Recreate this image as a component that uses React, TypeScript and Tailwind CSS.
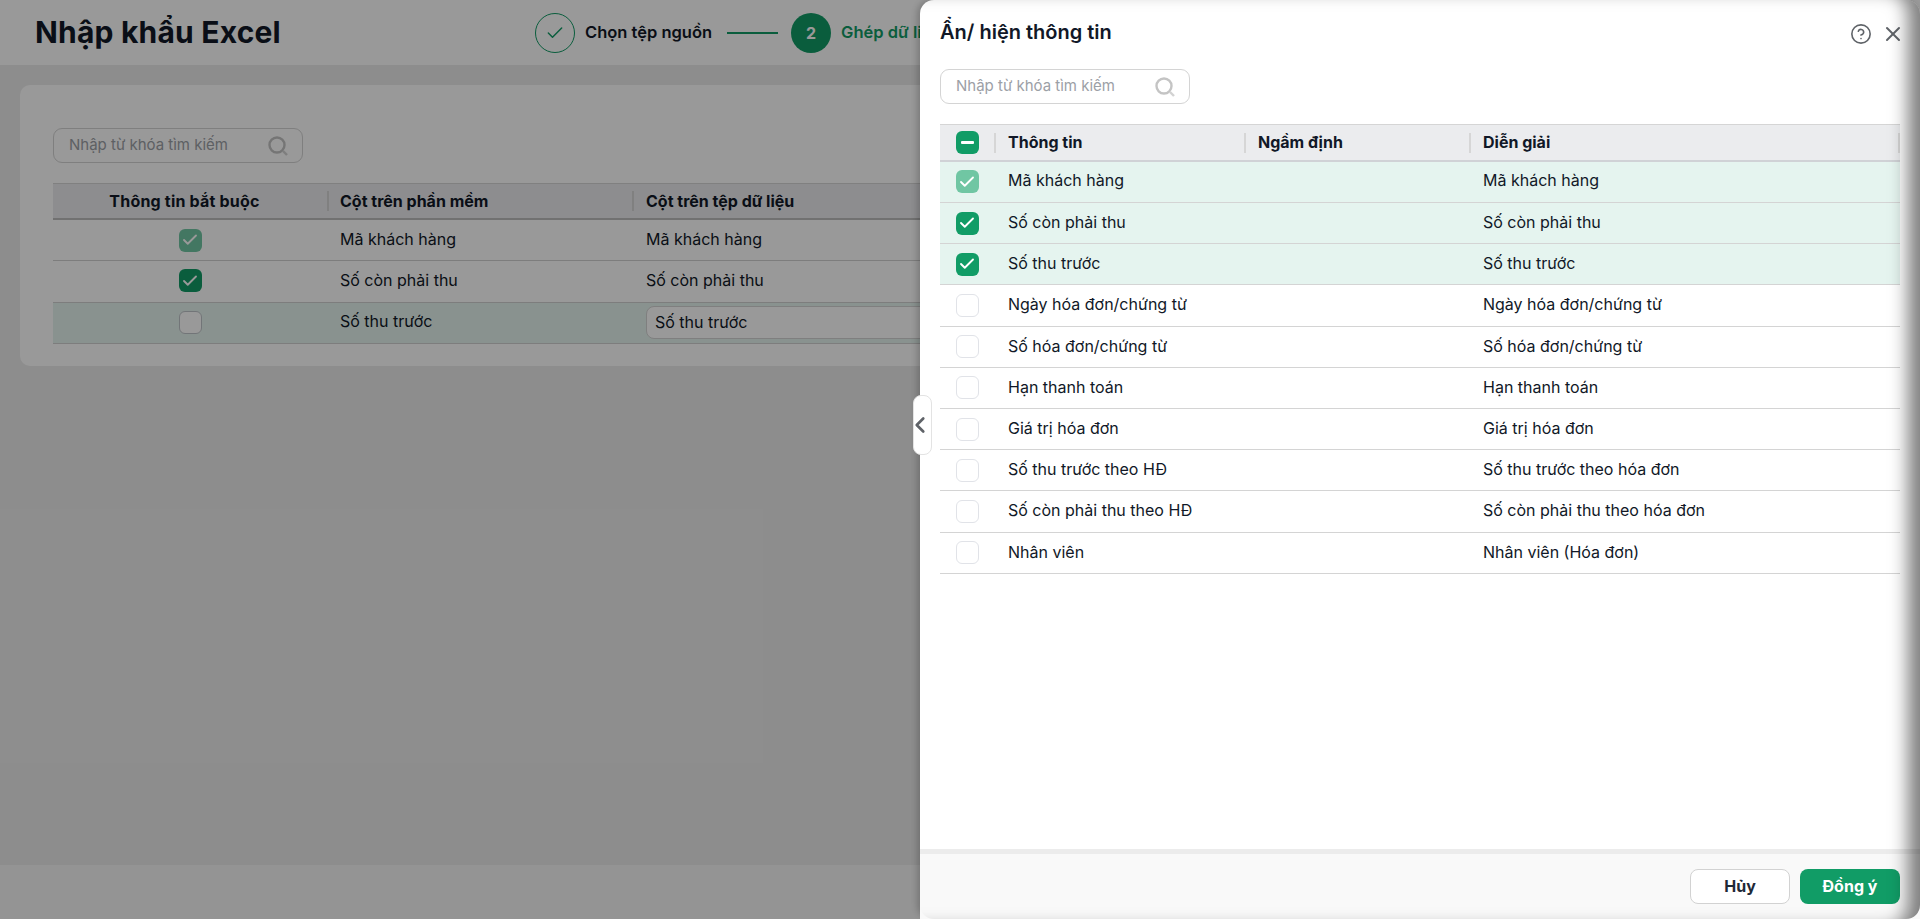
import { Check, ChevronLeft, CircleHelp, X } from "lucide-react";

type CheckState = "off" | "on" | "locked";

const fieldRows: { name: string; desc: string; state: CheckState }[] = [
  { name: "Mã khách hàng", desc: "Mã khách hàng", state: "locked" },
  { name: "Số còn phải thu", desc: "Số còn phải thu", state: "on" },
  { name: "Số thu trước", desc: "Số thu trước", state: "on" },
  { name: "Ngày hóa đơn/chứng từ", desc: "Ngày hóa đơn/chứng từ", state: "off" },
  { name: "Số hóa đơn/chứng từ", desc: "Số hóa đơn/chứng từ", state: "off" },
  { name: "Hạn thanh toán", desc: "Hạn thanh toán", state: "off" },
  { name: "Giá trị hóa đơn", desc: "Giá trị hóa đơn", state: "off" },
  { name: "Số thu trước theo HĐ", desc: "Số thu trước theo hóa đơn", state: "off" },
  { name: "Số còn phải thu theo HĐ", desc: "Số còn phải thu theo hóa đơn", state: "off" },
  { name: "Nhân viên", desc: "Nhân viên (Hóa đơn)", state: "off" },
];

function Box({ state, dark }: { state: CheckState; dark?: boolean }) {
  if (state === "off") {
    return (
      <span
        className={`block h-[23px] w-[23px] rounded-[6px] border bg-white ${
          dark ? "border-[#bfc4c9]" : "border-[#e1e3e8]"
        }`}
      />
    );
  }
  return (
    <span
      className={`flex h-[23px] w-[23px] items-center justify-center rounded-[6px] ${
        state === "on" ? "bg-[#119c66]" : "bg-[#70c6a3]"
      }`}
    >
      <Check className="h-[18px] w-[18px] text-white" strokeWidth={2.5} />
    </span>
  );
}

function SearchBox() {
  return (
    <div className="flex h-[35px] w-[250px] items-center justify-between rounded-[9px] border border-[#d4d4d4] bg-white pl-[15px] pr-[13px]">
      <span className="text-[15px] text-[#9ca0a6]">Nhập từ khóa tìm kiếm</span>
      <svg width="22" height="22" viewBox="0 0 22 22" fill="none">
        <circle cx="10" cy="10" r="7.5" stroke="#c4c4c4" strokeWidth="2.4" />
        <path d="M16 16l4 4" stroke="#d2d2d2" strokeWidth="2.4" />
      </svg>
    </div>
  );
}

function BackgroundPage() {
  return (
    <div className="flex h-[919px] flex-col overflow-hidden bg-[#ececec]">
      <header className="flex h-[65px] shrink-0 items-center bg-white pl-[35px]">
        <h1 className="w-[500px] text-[30px] font-bold tracking-[0.2px] text-[#111827]">Nhập khẩu Excel</h1>
        <div className="flex items-center">
          <span className="flex h-10 w-10 items-center justify-center rounded-full border border-[#119c66]">
            <Check className="h-5 w-5 text-[#119c66]" strokeWidth={1.75} />
          </span>
          <span className="ml-[10px] whitespace-nowrap text-[16.5px] font-semibold text-[#111827]">Chọn tệp nguồn</span>
          <span className="ml-[15px] h-[2px] w-[51px] bg-[#119c66]" />
          <span className="ml-[13px] flex h-10 w-10 items-center justify-center rounded-full bg-[#119c66] text-[16px] font-bold text-white">
            2
          </span>
          <span className="ml-[10px] whitespace-nowrap text-[16.5px] font-semibold text-[#119c66]">Ghép dữ liệu</span>
        </div>
      </header>

      <main className="flex-1 px-5 pt-5">
        <div className="h-[281px] w-[1500px] rounded-[10px] bg-white pl-[33px] pt-[43px]">
          <SearchBox />
          <div className="mt-[20px] w-[1400px] text-[16px] text-[#111827]">
            <div className="flex h-[37px] items-center border-y border-t-[#d5d5d5] border-b-[#bdbdbd] border-b-2 bg-[#ebecee] font-bold">
              <div className="w-[274px] pr-[11px] text-center tracking-[0.2px]">Thông tin bắt buộc</div>
              <div className="h-5 w-[2px] bg-[#d6d6d6]" />
              <div className="w-[303px] pl-[11px]">Cột trên phần mềm</div>
              <div className="h-5 w-[2px] bg-[#d6d6d6]" />
              <div className="pl-[12px]">Cột trên tệp dữ liệu</div>
            </div>
            {fieldRows.slice(0, 3).map((row, i) => (
              <div
                key={row.name}
                className={`flex items-center border-b border-[#d0d0d0] ${
                  i === 0 ? "h-[41px]" : i === 1 ? "h-[42px]" : "h-[41px] bg-[#e5f4ef]"
                }`}
              >
                <div className={`flex w-[274px] justify-center ${i === 0 ? "" : "pb-[2px]"}`}>
                  <Box state={i === 2 ? "off" : row.state} dark={i === 2} />
                </div>
                <div className={`w-[305px] pl-[13px] ${i === 0 ? "pb-[3px]" : "pb-[4px]"}`}>{row.name}</div>
                {i === 2 ? (
                  <div className="pb-[2px] pl-[14px]">
                    <div className="flex h-[33px] w-[500px] items-center rounded-[8px] border border-[#d4d4d4] bg-white px-2">
                      {row.name}
                    </div>
                  </div>
                ) : (
                  <div className={`pl-[14px] ${i === 0 ? "pb-[3px]" : "pb-[4px]"}`}>{row.name}</div>
                )}
              </div>
            ))}
          </div>
        </div>
      </main>

      <footer className="h-[54px] shrink-0 bg-[#f7f7f7]" />
    </div>
  );
}

function ColumnsDrawer() {
  return (
    <aside className="absolute inset-y-0 left-[920px] right-0 flex flex-col rounded-[14px] bg-white text-[16px] text-[#111827] shadow-[-3px_0_6px_rgba(0,0,0,0.2)]">
      <div className="flex h-[69px] shrink-0 items-start justify-between pl-[20px] pr-[15px] pt-[19px]">
        <h2 className="text-[20px] font-semibold leading-[26px]">Ẩn/ hiện thông tin</h2>
        <div className="flex items-center gap-[9px] pt-[3px] text-[#5f6368]">
          <CircleHelp className="h-[22px] w-[22px]" strokeWidth={1.75} />
          <X className="h-[24px] w-[24px]" strokeWidth={2} />
        </div>
      </div>

      <div className="pl-[20px]">
        <SearchBox />
      </div>

      <div className="ml-[20px] mr-[20px] mt-[20px] flex-1">
        <div className="flex h-[38px] items-center border-y border-t-[#d5d5d5] border-b-[#d0d2d6] border-b-2 bg-[#ebecee] font-bold">
          <div className="flex w-[54px] justify-center px-[4px]">
            <span className="flex h-[23px] w-[23px] items-center justify-center rounded-[6px] bg-[#119c66]">
              <span className="h-[3px] w-[13px] rounded-[1px] bg-white" />
            </span>
          </div>
          <div className="h-5 w-[2px] bg-[#d6d6d6]" />
          <div className="w-[248px] pb-[2px] pl-[12px]">Thông tin</div>
          <div className="h-5 w-[2px] bg-[#d6d6d6]" />
          <div className="w-[223px] pb-[2px] pl-[12px]">Ngầm định</div>
          <div className="h-5 w-[2px] bg-[#d6d6d6]" />
          <div className="flex-1 pb-[2px] pl-[12px]">Diễn giải</div>
          <div className="h-5 w-[2px] bg-[#d6d6d6]" />
        </div>
        {fieldRows.map((row, i) => (
          <div
            key={row.name}
            className={`flex items-center border-b border-[#d4d4d4] ${i === 0 ? "h-[41px]" : "h-[41.2px]"} ${
              i < 3 ? "bg-[#e5f4ef]" : ""
            }`}
          >
            <div className={`flex w-[54px] justify-center px-[4px] ${i === 0 ? "pb-[1px]" : ""}`}>
              <Box state={row.state} />
            </div>
            <div className={`w-[250px] whitespace-nowrap pl-[14px] ${i === 0 ? "pb-[4px]" : "pb-[2px]"}`}>{row.name}</div>
            <div className="w-[225px]" />
            <div className={`pl-[14px] ${i === 0 ? "pb-[4px]" : "pb-[2px]"}`}>{row.desc}</div>
          </div>
        ))}
      </div>

      <div className="flex h-[70px] shrink-0 items-center justify-end gap-[10px] border-t-[5px] border-[#ececec] bg-[#f9f9f9] pb-[1px] pr-[20px]">
        <button className="h-[35px] w-[100px] rounded-[8px] border border-[#d2d2d2] bg-white font-bold text-[#1f2937]">
          Hủy
        </button>
        <button className="h-[35px] w-[100px] rounded-[8px] bg-[#119c66] font-bold text-white">Đồng ý</button>
      </div>

      {/* collapse handle */}
      <button className="absolute left-[-7px] top-[395px] flex h-[60px] w-[19px] items-center justify-center overflow-hidden rounded-[8px] border border-[#e3e3e3] bg-white pr-[5px] text-[#5f6368]">
        <ChevronLeft className="h-[26px] w-[26px] shrink-0" strokeWidth={2.5} />
      </button>

      <div className="pointer-events-none absolute inset-0 rounded-[14px] shadow-[inset_-22px_0_18px_-10px_rgba(0,0,0,0.5)]" />
    </aside>
  );
}

export default function App() {
  return (
    <div className="relative h-[919px] overflow-hidden font-['Inter',sans-serif]">
      <BackgroundPage />
      <div className="absolute inset-0 bg-black/40" />
      <ColumnsDrawer />
    </div>
  );
}
